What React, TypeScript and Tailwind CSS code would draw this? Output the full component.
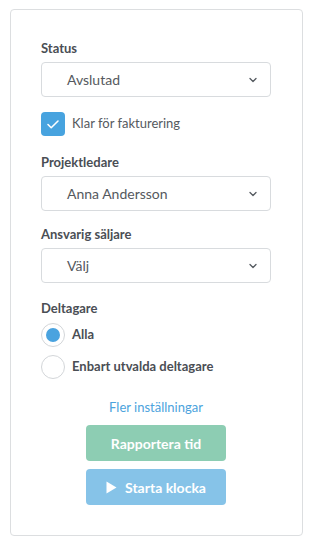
import React, { useState } from 'react';

const Chevron = () => (
  <svg width="10" height="10" viewBox="0 0 10 10" fill="none" className="text-[#555a60]">
    <path d="M2 3.5l3 3 3-3" stroke="currentColor" strokeWidth="1.3" strokeLinecap="round" strokeLinejoin="round" />
  </svg>
);

const Select = ({ label, value }: { label: string; value: string }) => (
  <div>
    <div className="text-[13px] font-bold text-[#4a4e54] leading-[16px] mb-[6px]">{label}</div>
    <div className="h-[35px] w-[230px] border border-[#d8dbde] rounded-[4px] flex items-center justify-between pl-[25px] pr-[12px] bg-white">
      <span className="text-[14px] text-[#55595e]">{value}</span>
      <Chevron />
    </div>
  </div>
);

const Radio = ({ checked, label }: { checked: boolean; label: string }) => (
  <div className="flex items-center gap-[7px]">
    <div className="w-[24px] h-[24px] rounded-full border border-[#d3d6d9] flex items-center justify-center bg-white">
      {checked && <div className="w-[14px] h-[14px] rounded-full bg-[#4aa3df]" />}
    </div>
    <span className="text-[13px] font-bold text-[#4a4e54]">{label}</span>
  </div>
);

export default function App() {
  const [ready] = useState(true);
  return (
    <div className="w-[317px] h-[545px] bg-white pt-[9px] pl-[10px]" style={{ fontFamily: 'Lato, "Open Sans", sans-serif' }}>
      <div className="w-[293px] h-[527px] border border-[#dcdee0] rounded-[4px] pl-[30px] pt-[30px]">
        <Select label="Status" value="Avslutad" />

        <div className="flex items-center gap-[7px] mt-[15px]">
          <div className="w-[24px] h-[24px] rounded-[4px] bg-[#47a3df] flex items-center justify-center">
            {ready && (
              <svg width="16" height="16" viewBox="0 0 16 16" fill="none">
                <path d="M3 8.5l3.2 3.2L13 5" stroke="white" strokeWidth="1.6" strokeLinecap="round" strokeLinejoin="round" />
              </svg>
            )}
          </div>
          <span className="text-[13px] text-[#55595e]">Klar för fakturering</span>
        </div>

        <div className="mt-[18px]">
          <Select label="Projektledare" value="Anna Andersson" />
        </div>
        <div className="mt-[15px]">
          <Select label="Ansvarig säljare" value="Välj" />
        </div>

        <div className="mt-[17px] text-[13px] font-bold text-[#4a4e54] leading-[16px]">Deltagare</div>
        <div className="mt-[7px] flex flex-col gap-[8px]">
          <Radio checked label="Alla" />
          <Radio checked={false} label="Enbart utvalda deltagare" />
        </div>

        <div className="w-[230px] flex flex-col items-center mt-[20px]">
          <a className="text-[13px] text-[#4ca3dd] leading-[16px]">Fler inställningar</a>
          <button className="mt-[10px] w-[140px] h-[36px] rounded-[4px] bg-[#8dcdb3] text-white text-[14px] font-bold">
            Rapportera tid
          </button>
          <button className="mt-[8px] w-[140px] h-[36px] rounded-[4px] bg-[#86c3e8] text-white text-[14px] font-bold flex items-center justify-center gap-[8px]">
            <svg width="11" height="13" viewBox="0 0 11 13">
              <path d="M0.5 0.5l10 6-10 6z" fill="white" />
            </svg>
            Starta klocka
          </button>
        </div>
      </div>
    </div>
  );
}
